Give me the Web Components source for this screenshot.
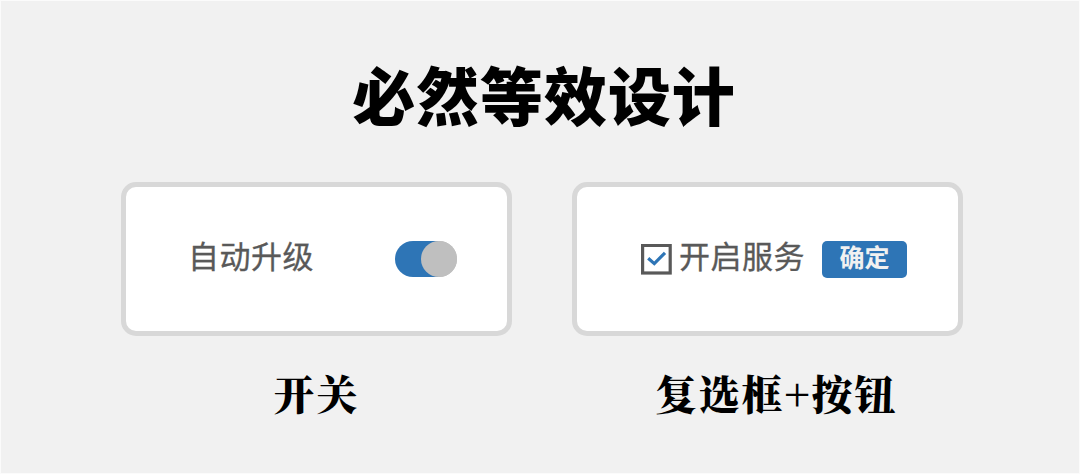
<!DOCTYPE html>
<html lang="zh-CN">
<head>
<meta charset="UTF-8">
<title>必然等效设计</title>
<style>
  html, body {
    margin: 0;
    height: 100%;
  }
</style>
</head>
<body>
<design-board>
  <span slot="title">必然等效设计</span>

  <demo-figure>
    <demo-label>自动升级</demo-label>
    <toggle-switch on></toggle-switch>
    <span slot="caption">开关</span>
  </demo-figure>

  <demo-figure class="second">
    <check-box checked></check-box>
    <demo-label>开启服务</demo-label>
    <action-button>确定</action-button>
    <span slot="caption">复选框+按钮</span>
  </demo-figure>
</design-board>

<script>
/**
 * DesignBoard - page background, headline and a row of figures
 */
class DesignBoard extends HTMLElement {
  constructor() {
    super();
    this.attachShadow({ mode: 'open' });
    this.shadowRoot.innerHTML = `
      <style>
        :host {
          display: flex;
          flex-direction: column;
          align-items: center;
          box-sizing: border-box;
          width: 1080px;
          height: 474px;
          overflow: hidden;
          border: 1px solid #fbfbfb;
          background: #f1f1f1;
          font-family: "Noto Sans CJK SC", sans-serif;
        }

        h1 {
          margin: 47px 0 0 8px;
          height: 90px;
          font-size: 63px;
          font-weight: 900;
          line-height: 90px;
          letter-spacing: 0.9px;
          white-space: nowrap;
          color: #000;
        }

        .row {
          display: flex;
          gap: 60px;
          margin: 44px 0 0 4px;
        }
      </style>
      <h1><slot name="title"></slot></h1>
      <div class="row"><slot></slot></div>
    `;
  }
}

/**
 * DemoFigure - bordered card with controls and a caption below it
 */
class DemoFigure extends HTMLElement {
  constructor() {
    super();
    this.attachShadow({ mode: 'open' });
    this.shadowRoot.innerHTML = `
      <style>
        :host {
          display: block;
          width: 391px;
        }

        .card {
          display: flex;
          align-items: center;
          justify-content: space-between;
          box-sizing: border-box;
          height: 154px;
          padding: 0 50px 0 62px;
          border: 5px solid #d8d8d8;
          border-radius: 15px;
          background: #fff;
        }

        :host(.second) .card {
          justify-content: flex-start;
          padding: 0 0 0 64px;
        }

        :host(.second) {
          --label-gap: 7px 17px;
        }

        .caption {
          margin-top: 27px;
          font-family: "Noto Serif CJK SC", "Source Han Serif SC", serif;
          font-size: 41px;
          font-weight: 900;
          line-height: 60px;
          letter-spacing: 2px;
          text-align: center;
          white-space: nowrap;
          color: #000;
        }

        :host(.second) .caption {
          padding-left: 18px;
        }
      </style>
      <div class="card"><slot></slot></div>
      <div class="caption"><slot name="caption"></slot></div>
    `;
  }
}

/**
 * DemoLabel - text next to a control
 */
class DemoLabel extends HTMLElement {
  constructor() {
    super();
    this.attachShadow({ mode: 'open' });
    this.shadowRoot.innerHTML = `
      <style>
        :host {
          display: block;
          margin-inline: var(--label-gap, 0);
          padding-bottom: 8px;
          font-size: 31px;
          line-height: 40px;
          letter-spacing: 0.5px;
          white-space: nowrap;
          color: #595959;
          -webkit-text-stroke: 0.3px #595959;
        }
      </style>
      <slot></slot>
    `;
  }
}

/**
 * ToggleSwitch - pill track with a round knob
 */
class ToggleSwitch extends HTMLElement {
  constructor() {
    super();
    this.attachShadow({ mode: 'open' });
    this.shadowRoot.innerHTML = `
      <style>
        :host {
          display: flex;
          width: 62px;
          height: 36px;
          border-radius: 18px;
          background: #bfbfbf;
        }

        :host([on]) {
          justify-content: flex-end;
          background: linear-gradient(90deg, #2e75b6 72%, #bfbfbf 72%);
        }

        .knob {
          width: 36px;
          height: 36px;
          border-radius: 50%;
          background: #bfbfbf;
        }
      </style>
      <div class="knob"></div>
    `;
  }
}

/**
 * CheckBox - square box with a tick
 */
class CheckBox extends HTMLElement {
  constructor() {
    super();
    this.attachShadow({ mode: 'open' });
    this.shadowRoot.innerHTML = `
      <style>
        :host {
          display: block;
          flex: none;
          width: 31px;
          height: 31px;
        }

        svg {
          display: block;
        }

        .tick {
          visibility: hidden;
        }

        :host([checked]) .tick {
          visibility: visible;
        }
      </style>
      <svg width="31" height="31" viewBox="0 0 31 31" fill="none">
        <rect x="1.6" y="1.4" width="27.6" height="27.6" stroke="#595959" stroke-width="3.2"/>
        <path class="tick" d="M7.2 14.2L13.3 19.6L24 8.8" stroke="#2e75b6" stroke-width="3.2"/>
      </svg>
    `;
  }
}

/**
 * ActionButton - filled blue button
 */
class ActionButton extends HTMLElement {
  constructor() {
    super();
    this.attachShadow({ mode: 'open' });
    this.shadowRoot.innerHTML = `
      <style>
        :host {
          display: block;
        }

        button {
          display: block;
          width: 85px;
          height: 37px;
          padding: 0 0 7px;
          border: none;
          border-radius: 5px;
          background: #2e75b6;
          color: #f1f1f1;
          font-family: inherit;
          font-size: 25px;
          font-weight: 700;
          line-height: 30px;
        }
      </style>
      <button type="button"><slot></slot></button>
    `;
  }
}

customElements.define('design-board', DesignBoard);
customElements.define('demo-figure', DemoFigure);
customElements.define('demo-label', DemoLabel);
customElements.define('toggle-switch', ToggleSwitch);
customElements.define('check-box', CheckBox);
customElements.define('action-button', ActionButton);
</script>
</body>
</html>
